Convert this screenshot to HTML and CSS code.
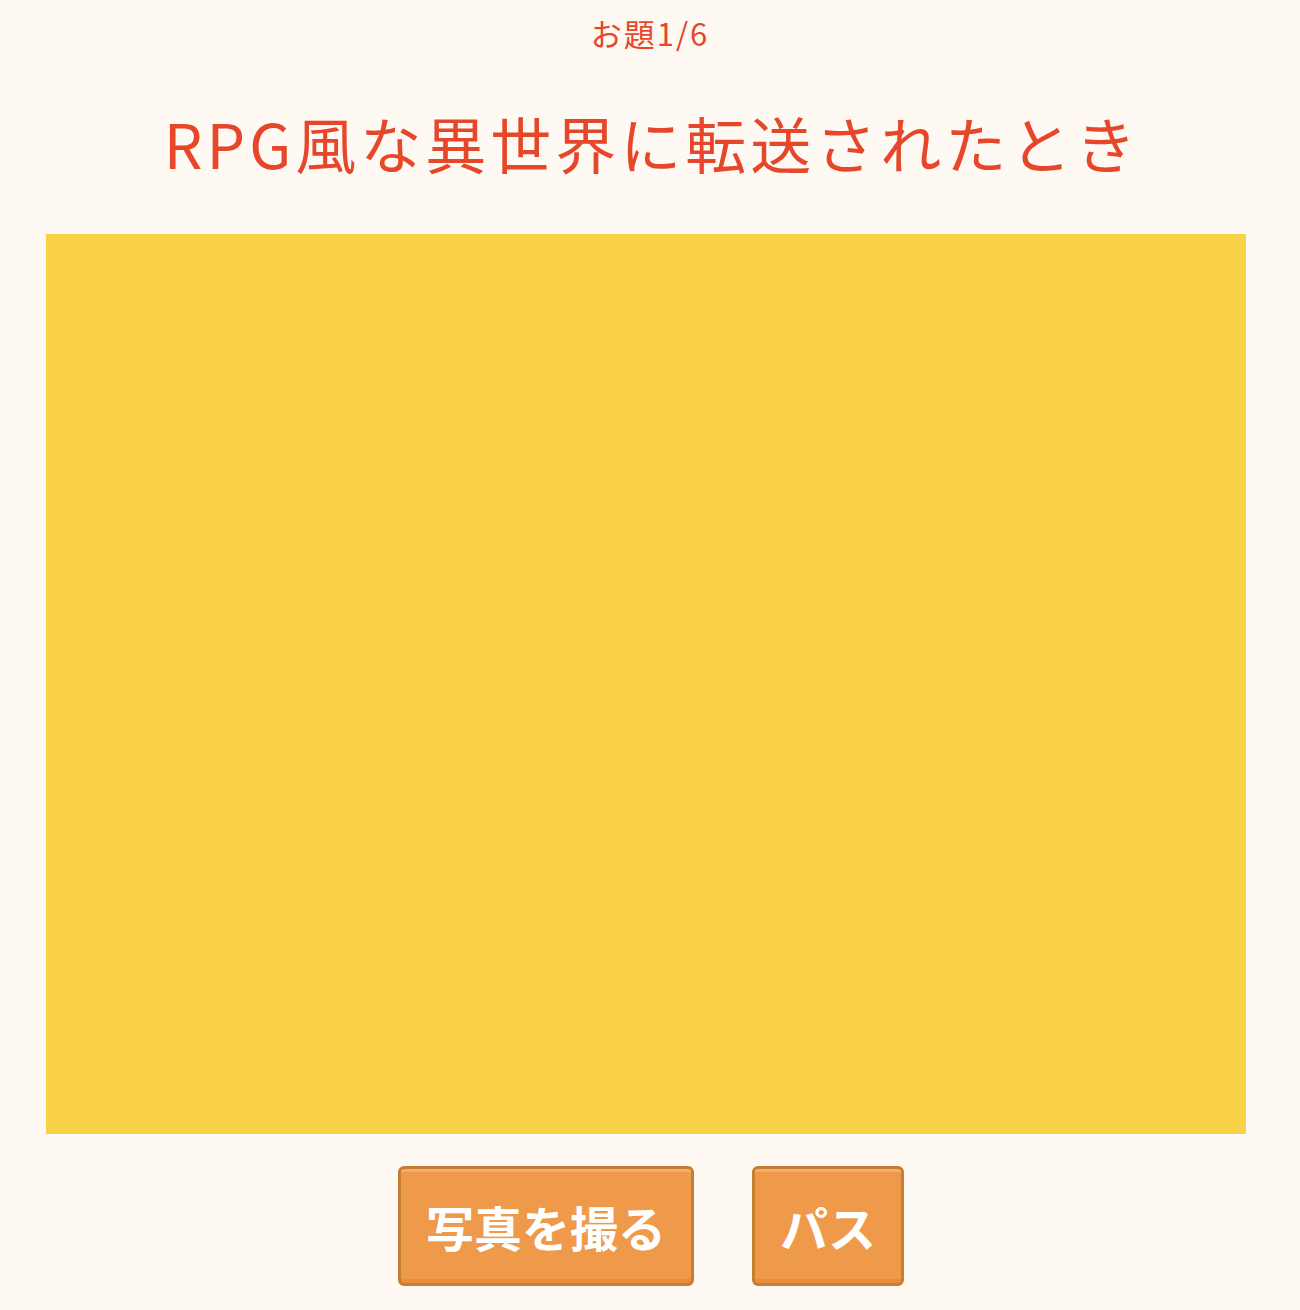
FILE: index.html
```html
<!DOCTYPE html>
<html lang="ja">
<head>
<meta charset="utf-8">
<title>お題</title>
<link rel="stylesheet" href="styles.css">
</head>
<body>
<main class="page">
  <p class="counter">お題1/6</p>
  <h1 class="title">RPG風な異世界に転送されたとき</h1>
  <div class="camera"></div>
  <div class="actions">
    <button class="btn">写真を撮る</button>
    <button class="btn">パス</button>
  </div>
</main>
</body>
</html>
```

FILE: styles.css
```css
html, body {
  margin: 0;
  padding: 0;
  background: #fef9f2;
}
body {
  font-family: "Noto Sans CJK JP", "Noto Sans", sans-serif;
  color: #e6472b;
}
.page {
  display: flex;
  flex-direction: column;
  align-items: center;
  padding-top: 10px;
}
.counter {
  margin: 0;
  font-size: 31px;
  line-height: 46px;
  letter-spacing: 2px;
}
.title {
  margin: 42px 0 0 4px;
  font-size: 61px;
  font-weight: 400;
  line-height: 90px;
  letter-spacing: 4px;
}
.camera {
  margin: 46px 8px 0 0;
  width: 1200px;
  height: 900px;
  background: #f8d147;
}
.actions {
  display: flex;
  gap: 58px;
  margin-top: 32px;
  margin-left: 2px;
}
.btn {
  box-sizing: border-box;
  height: 120px;
  padding: 0 25px;
  border: 3px solid #c67f31;
  border-radius: 6px;
  background: #ef9a4b;
  box-shadow: inset 0 3px 0 #f3ae6d, inset 0 -4px 0 #e58d3f;
  color: #ffffff;
  font-family: "Noto Sans CJK JP", sans-serif;
  font-size: 48px;
  font-weight: 700;
  line-height: 1;
}
```
